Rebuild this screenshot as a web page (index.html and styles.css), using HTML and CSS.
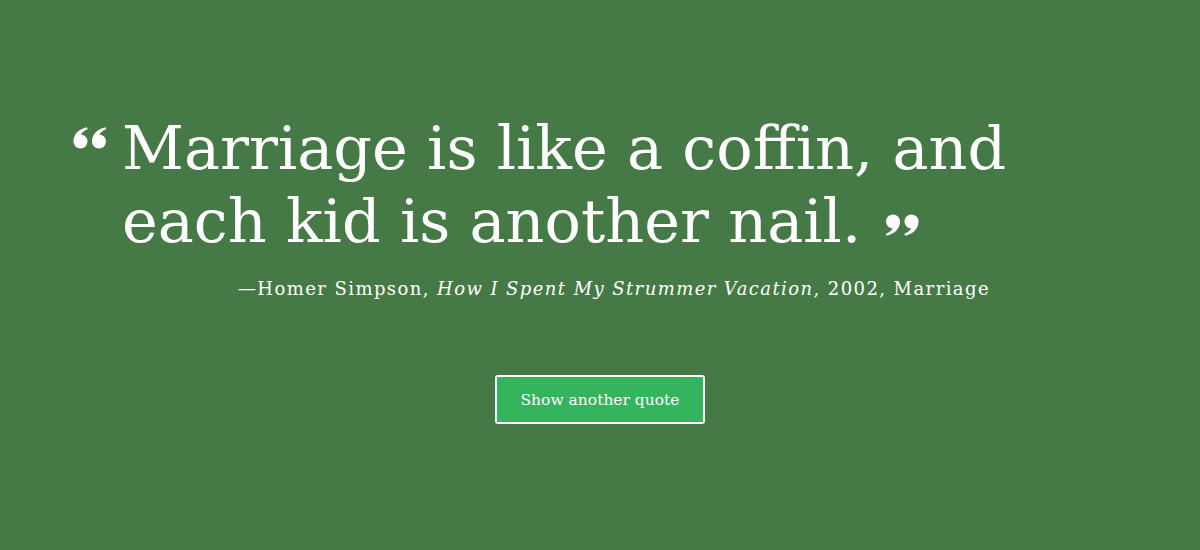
FILE: index.html
```html
<!DOCTYPE html>
<html>
<head>
<meta charset="utf-8">
<link rel="stylesheet" href="styles.css">
</head>
<body>
<main class="page">
  <blockquote class="quote">
    <span class="mark mark-open"><svg width="34" height="22" viewBox="0 0 34 22"><g fill="#fff"><circle cx="7.5" cy="14.5" r="7"/><path d="M0.6 14.5 C0.6 7 6 2 14 0.3 L14.6 2.2 C10 4 7.5 7 7.5 9.5 Z"/><circle cx="26" cy="14.5" r="7"/><path d="M19.1 14.5 C19.1 7 24.5 2 32.5 0.3 L33.1 2.2 C28.5 4 26 7 26 9.5 Z"/></g></svg></span>
    <p class="text">Marriage is like a coffin, and each kid is another nail.<span class="mark mark-close"><svg width="34" height="26" viewBox="0 0 34 22"><g fill="#fff" transform="rotate(180 17 11)"><circle cx="7.5" cy="14.5" r="7"/><path d="M0.6 14.5 C0.6 7 6 2 14 0.3 L14.6 2.2 C10 4 7.5 7 7.5 9.5 Z"/><circle cx="26" cy="14.5" r="7"/><path d="M19.1 14.5 C19.1 7 24.5 2 32.5 0.3 L33.1 2.2 C28.5 4 26 7 26 9.5 Z"/></g></svg></span></p>
  </blockquote>
  <p class="cite">—Homer Simpson, <em>How I Spent My Strummer Vacation</em>, 2002, Marriage</p>
  <div class="actions"><button class="btn">Show another quote</button></div>
</main>
</body>
</html>
```
FILE: styles.css
```css
html, body {
  margin: 0;
  padding: 0;
  background: #457a46;
}
body {
  font-family: "DejaVu Serif", "Liberation Serif", serif;
  color: #fff;
  height: 550px;
  overflow: hidden;
}
.page {
  padding-top: 112px;
}
.quote {
  margin: 0;
  padding-left: 73px;
  display: flex;
  align-items: flex-start;
}
.mark-open {
  flex: 0 0 49px;
  margin-top: 15px;
  display: block;
}
.mark-open svg { display: block; }
.text {
  margin: 0;
  font-size: 60.5px;
  line-height: 73px;
  width: 910px;
}
.mark-close {
  display: inline-block;
  margin-left: 24px;
  vertical-align: 4px;
}
.mark-close svg { display: block; }
.cite {
  margin: 20px 0 0;
  text-align: right;
  padding-right: 210px;
  font-size: 18px;
  letter-spacing: 1.42px;
}
.cite em { font-style: italic; }
.actions {
  display: flex;
  justify-content: center;
  margin-top: 76px;
}
.btn {
  width: 210px;
  height: 49px;
  background: #35b45e;
  border: 2px solid #fff;
  border-radius: 3px;
  color: #fff;
  font-family: "DejaVu Serif", serif;
  font-size: 15.5px;
  padding: 0;
}
```
